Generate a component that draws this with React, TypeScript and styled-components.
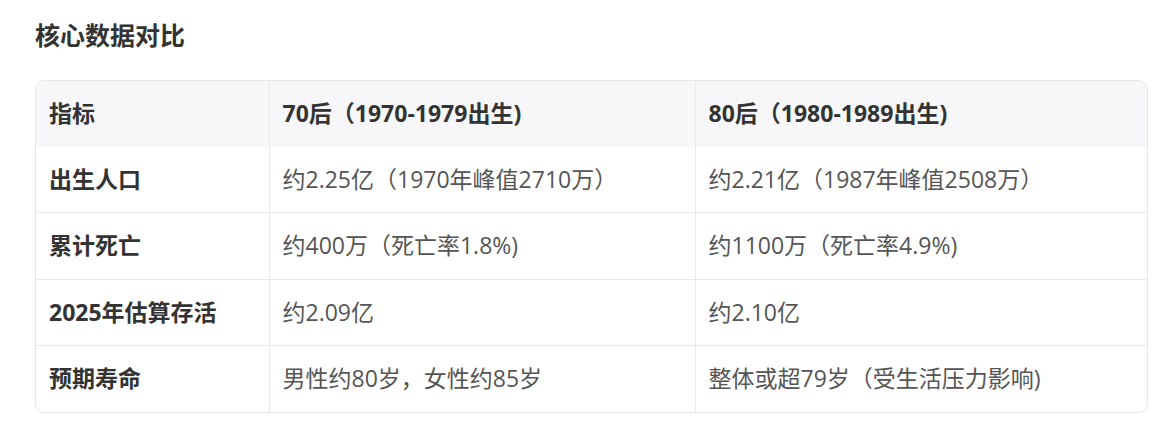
import React from "react";
import styled, { createGlobalStyle } from "styled-components";

const Global = createGlobalStyle`
  html, body { margin: 0; padding: 0; background: #ffffff; }
  body { font-family: "Open Sans", "Noto Sans CJK SC", sans-serif; }
`;

const Page = styled.div`
  padding: 17px 30px 0 35px;
`;

const Title = styled.h3`
  margin: 0 0 26px 0;
  font-size: 25px;
  line-height: 37px;
  font-weight: 700;
  color: #333333;
  font-family: "Open Sans", "Noto Sans CJK SC", sans-serif;
`;

const TableWrap = styled.div`
  width: 1111px;
  border: 1px solid #e6e6e8;
  border-radius: 9px;
  overflow: hidden;
`;

const Table = styled.table`
  width: 100%;
  border-collapse: collapse;
  table-layout: fixed;
`;

const HeadRow = styled.tr`
  background: #f7f7f9;
`;

const Cell = styled.td<{ $bold?: boolean }>`
  padding: 16px 13px;
  line-height: 33.5px;
  font-size: 23px;
  font-weight: ${(p) => (p.$bold ? 700 : 400)};
  color: ${(p) => (p.$bold ? "#333333" : "#555555")};
  text-align: left;
  vertical-align: middle;
  border-bottom: 1px solid #e9e9eb;
  border-left: 1px solid #e9e9eb;
  white-space: nowrap;
  &:first-child { border-left: none; }
  tr:last-child > & { border-bottom: none; }
`;

const headers = ["指标", "70后（1970-1979出生)", "80后（1980-1989出生)"];

const rows: [string, string, string][] = [
  ["出生人口", "约2.25亿（1970年峰值2710万）", "约2.21亿（1987年峰值2508万）"],
  ["累计死亡", "约400万（死亡率1.8%)", "约1100万（死亡率4.9%)"],
  ["2025年估算存活", "约2.09亿", "约2.10亿"],
  ["预期寿命", "男性约80岁，女性约85岁", "整体或超79岁（受生活压力影响)"],
];

export default function App() {
  return (
    <>
      <Global />
      <Page>
        <Title>核心数据对比</Title>
        <TableWrap>
          <Table>
            <colgroup>
              <col style={{ width: 233 }} />
              <col style={{ width: 426 }} />
              <col />
            </colgroup>
            <thead>
              <HeadRow>
                {headers.map((h) => (
                  <Cell as="th" key={h} $bold>
                    {h}
                  </Cell>
                ))}
              </HeadRow>
            </thead>
            <tbody>
              {rows.map((r) => (
                <tr key={r[0]}>
                  <Cell $bold>{r[0]}</Cell>
                  <Cell>{r[1]}</Cell>
                  <Cell>{r[2]}</Cell>
                </tr>
              ))}
            </tbody>
          </Table>
        </TableWrap>
      </Page>
    </>
  );
}
